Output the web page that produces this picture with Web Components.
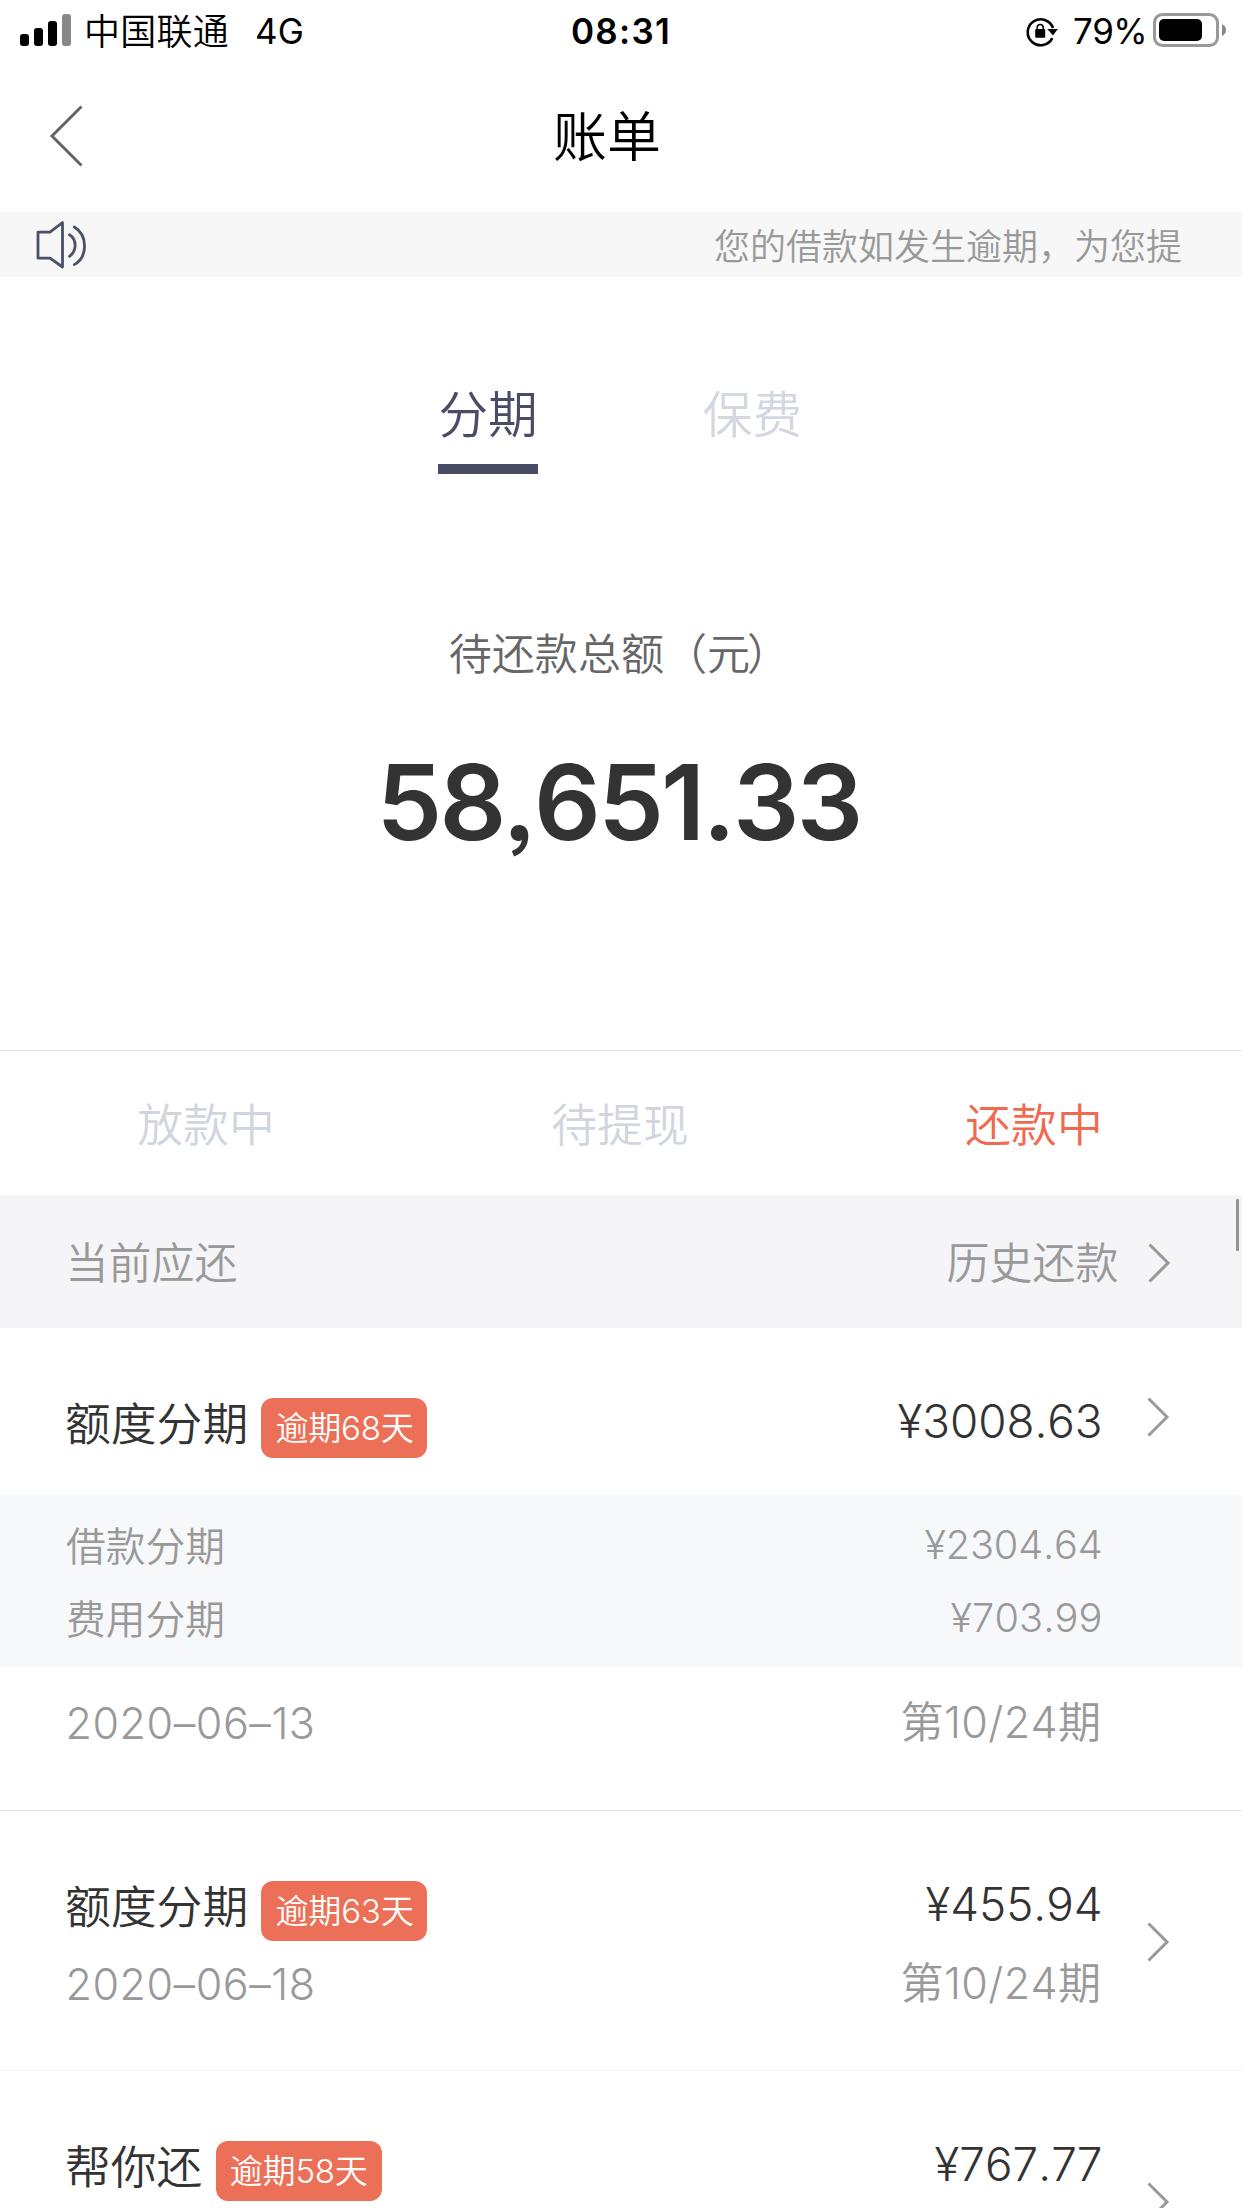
<!DOCTYPE html>
<html lang="zh-CN">
<head>
<meta charset="utf-8">
<title>账单</title>
<style>
html,body{margin:0;padding:0;background:#fff}
body{width:1242px;height:2208px;overflow:hidden;font-family:Inter,"Noto Sans CJK SC",sans-serif;font-weight:350;color:#333}
</style>
</head>
<body>
<bill-app></bill-app>
<script>
function define(name, render, after) {
  customElements.define(name, class extends HTMLElement {
    connectedCallback() {
      if (this.shadowRoot) return;
      this.attachShadow({ mode: 'open' }).innerHTML = render(this);
      if (after) after(this);
    }
  });
}
const at = (el, n) => el.getAttribute(n) || '';

/* Text run whose letter-spacing is set so that it fills w pixels */
define('fit-text', () => `
<style>:host{display:block;white-space:nowrap;flex:none;font-kerning:none}span{display:inline-block;white-space:pre}</style>
<span><slot></slot></span>`, el => {
  const w = parseFloat(at(el, 'w')), n = el.textContent.length;
  el.style.width = w + 'px';
  const natural = el.shadowRoot.querySelector('span').getBoundingClientRect().width;
  el.style.letterSpacing = ((w - natural) / n) + 'px';
});

define('chevron-icon', () => `
<style>:host{display:block;width:24px;height:42px;flex:none}svg{display:block}</style>
<svg width="24" height="42" viewBox="0 0 24 42" fill="none" stroke="#999" stroke-width="3"><path d="M2.5 2.5 21 21 2.5 39.5"/></svg>`);

define('status-bar', () => `
<style>
:host{display:flex;justify-content:space-between;height:62px;line-height:62px;font-size:35px;color:#000;font-weight:400}
.side{display:flex;width:500px}
.right{justify-content:flex-end}
svg{display:block;flex:none}
.carrier{font-size:36px;font-weight:350;margin-left:13px;line-height:64px}
.net{margin-left:26px}
.time{font-weight:600}
</style>
<div class="side">
<svg style="margin-left:20px" width="51" height="62"><rect x="0" y="34" width="9" height="12" rx="3"/><rect x="14" y="28" width="9" height="18" rx="3"/><rect x="28" y="21" width="9" height="25" rx="3"/><rect x="42" y="14" width="9" height="32" rx="3" fill="#888"/></svg>
<fit-text class="carrier" w="145">中国联通</fit-text>
<fit-text class="net" w="49">4G</fit-text>
</div>
<fit-text class="time" w="100">08:31</fit-text>
<div class="side right">
<svg width="34" height="62" viewBox="0 0 34 62"><path d="M27.3 38.2A13 13 0 1 1 28 28" fill="none" stroke="#000" stroke-width="2.6"/><path d="M22.3 29h10.5L28 35.5z"/><rect x="10.2" y="29" width="10" height="8.8" rx="1"/><path d="M12.2 30v-2.5a3 3 0 0 1 6 0V30" fill="none" stroke="#000" stroke-width="1.5"/></svg>
<fit-text style="margin-left:14px" w="74">79%</fit-text>
<svg style="margin:0 14px 0 6px" width="75" height="62"><rect x="1.5" y="14.5" width="63" height="31" rx="8" fill="none" stroke="#999" stroke-width="3"/><rect x="6" y="19" width="43" height="22" rx="5"/><path d="M69 24q4 2 4 6t-4 6z" fill="#888"/></svg>
</div>`);

define('nav-bar', el => `
<style>
:host{display:flex;align-items:center;height:150px;border-bottom:1px solid #f3f3f3;color:#000}
svg{display:block;margin:0 0 2px 49px}
h1{margin:0 0 0 470px;font-size:54px;font-weight:350;line-height:150px;padding-top:1px}
</style>
<svg width="34" height="62" viewBox="0 0 34 62" fill="none" stroke="#666" stroke-width="3"><path d="M32.5 1.5 3 31 32.5 60.5"/></svg>
<h1><fit-text w="108">${at(el, 'heading')}</fit-text></h1>`);

define('notice-bar', el => `
<style>
:host{display:flex;justify-content:space-between;align-items:center;height:64px;background:#f7f7f7;color:#999;font-size:36px;line-height:64px;padding:0 60px 0 35px}
svg{display:block}
fit-text{margin-top:4px}
</style>
<svg width="52" height="52" viewBox="0 0 52 52" fill="none" stroke="#4a5068" stroke-width="2.8" stroke-linejoin="round" stroke-linecap="round"><path d="M3 13.2H15L27.5 3.5V48L15 39.2H3z"/><path d="M34.5 15.8C42 20.5 42 32 34.5 37.3M39.3 8C53 16 53 38 39.3 45.6"/></svg>
<fit-text w="468"><slot></slot></fit-text>`, el => {
  el.shadowRoot.querySelector('fit-text').style.letterSpacing = '0';
});

define('plan-tabs', () => `
<style>
:host{display:flex;gap:165px;padding:98px 0 0 438.4px;height:257px;box-sizing:border-box;font-size:49.68px;line-height:80px;color:#d3d7df}
div{height:99px}
.on{color:#484d65;border-bottom:10px solid #484d65;height:89px}
</style>
<div class="on"><fit-text w="99.4">分期</fit-text></div>
<div><fit-text w="99.4">保费</fit-text></div>`);

define('total-amount', el => `
<style>
:host{display:flex;flex-direction:column;align-items:center;height:516px;border-bottom:1px solid #e8e8e8}
.label{font-size:43.06px;line-height:60px;color:#666;margin-top:90px}
.sum{font-size:104.5px;font-weight:600;line-height:140px;margin:48px 5px 0 0;color:#333;font-feature-settings:"ss03"}
.c{letter-spacing:-3px}
</style>
<fit-text class="label" w="344.5">待还款总额（<span class="c">元</span>）</fit-text>
<fit-text class="sum" w="484">${at(el, 'sum')}</fit-text>`, el => {
  el.shadowRoot.querySelector('.label').style.letterSpacing = '0';
});

define('status-tabs', () => `
<style>
:host{display:flex;height:144px;line-height:149px;font-size:45.8px;color:#d1d6de}
div{flex:1;display:flex;justify-content:center}
div fit-text{margin-right:2px}
.on{color:#ef6a50}
</style>
<div><fit-text w="137.4">放款中</fit-text></div><div><fit-text w="137.4">待提现</fit-text></div><div class="on"><fit-text w="137.4">还款中</fit-text></div>`);

define('section-bar', () => `
<style>
:host{display:flex;align-items:center;height:133px;background:#f5f5f8;color:#999;font-size:43px;line-height:133px;padding-left:65.5px}
fit-text{margin-top:3px}
.more{margin-left:auto}
chevron-icon{margin:3px 0 0 28px}
i{width:3px;height:52px;background:#949496;margin:4px 3px 0 65.5px;align-self:flex-start;border-radius:1px}
</style>
<fit-text w="172">当前应还</fit-text>
<fit-text class="more" w="172">历史还款</fit-text>
<chevron-icon></chevron-icon><i></i>`);

define('overdue-badge', () => `
<style>
:host{display:block;flex:none;box-sizing:border-box;width:166px;height:60px;border-radius:12px;background:#ec7058;color:#fff;font-size:33.12px;line-height:61px;padding-left:14px}
</style>
<fit-text w="139"><slot></slot></fit-text>`, el => {
  const t = el.shadowRoot.querySelector('fit-text'), s = t.shadowRoot.querySelector('span');
  t.style.letterSpacing = '0';
  t.style.letterSpacing = ((138 - s.getBoundingClientRect().width) / el.textContent.length) + 'px';
});

/* One bill: title + badge + amount, optional breakdown panel, date + term */
define('bill-row', el => {
  const parts = at(el, 'parts') ? at(el, 'parts').split(';').map(p => p.split(',')) : [];
  return `
<style>
:host{display:block;box-sizing:border-box;color:#333}
.head{display:flex;font-size:45.8px;height:60px;line-height:60px;padding:70px 0 0 65px}
.head .name{line-height:53px}
.head overdue-badge{margin-left:13.3px}
.head .amt{margin-left:auto;line-height:47px}
.edge{width:139.5px;display:flex;justify-content:flex-start;flex:none}
.edge chevron-icon{margin-left:43.5px}
.panel{margin-top:37px;height:172px;background:#f7f8fa;color:#999;font-size:39.74px;line-height:73px;box-sizing:border-box;padding:16px 0 0 66px}
.line{display:flex;justify-content:space-between;padding-right:139.5px}
.line .v{line-height:69px}
.foot{display:flex;justify-content:space-between;font-size:43.06px;line-height:60px;color:#999;padding:0 140.5px 0 65.5px}
.foot .t{margin-top:-1px}
</style>
<div class="head"><fit-text class="name" w="${at(el, 'tw')}">${at(el, 'name')}</fit-text><overdue-badge>${at(el, 'overdue')}</overdue-badge>
<fit-text class="amt" w="${at(el, 'aw')}">${at(el, 'amount')}</fit-text><div class="edge"><chevron-icon style="margin-top:${at(el, 'cy')}px"></chevron-icon></div></div>
${parts.length ? `<div class="panel">${parts.map(p => `<div class="line"><fit-text w="159">${p[0]}</fit-text><fit-text class="v" w="${p[2]}">${p[1]}</fit-text></div>`).join('')}</div>` : ''}
${at(el, 'date') ? `<div class="foot" style="margin-top:${parts.length ? 26 : 13}px"><fit-text w="250">${at(el, 'date')}</fit-text><fit-text class="t" w="201">${at(el, 'term')}</fit-text></div>` : ''}`;
});

define('bill-app', () => `
<style>
:host{display:block;width:1242px;height:2208px;overflow:hidden;background:#fff}
.r1{height:483px;border-bottom:1px solid #e5e5e5}
.r2{height:260px;border-bottom:1px solid #f3f3f3}
</style>
<status-bar></status-bar>
<nav-bar heading="账单"></nav-bar>
<notice-bar>您的借款如发生逾期，为您提</notice-bar>
<plan-tabs></plan-tabs>
<total-amount sum="58,651.33"></total-amount>
<status-tabs></status-tabs>
<section-bar></section-bar>
<bill-row class="r1" name="额度分期" tw="183.2" overdue="逾期68天" amount="¥3008.63" aw="205" cy="-2" parts="借款分期,¥2304.64,178;费用分期,¥703.99,152" date="2020–06–13" term="第10/24期"></bill-row>
<bill-row class="r2" name="额度分期" tw="183.2" overdue="逾期63天" amount="¥455.94" aw="177" cy="40" date="2020–06–18" term="第10/24期"></bill-row>
<bill-row name="帮你还" tw="137.4" overdue="逾期58天" amount="¥767.77" aw="168" cy="40"></bill-row>`);
</script>
</body>
</html>
